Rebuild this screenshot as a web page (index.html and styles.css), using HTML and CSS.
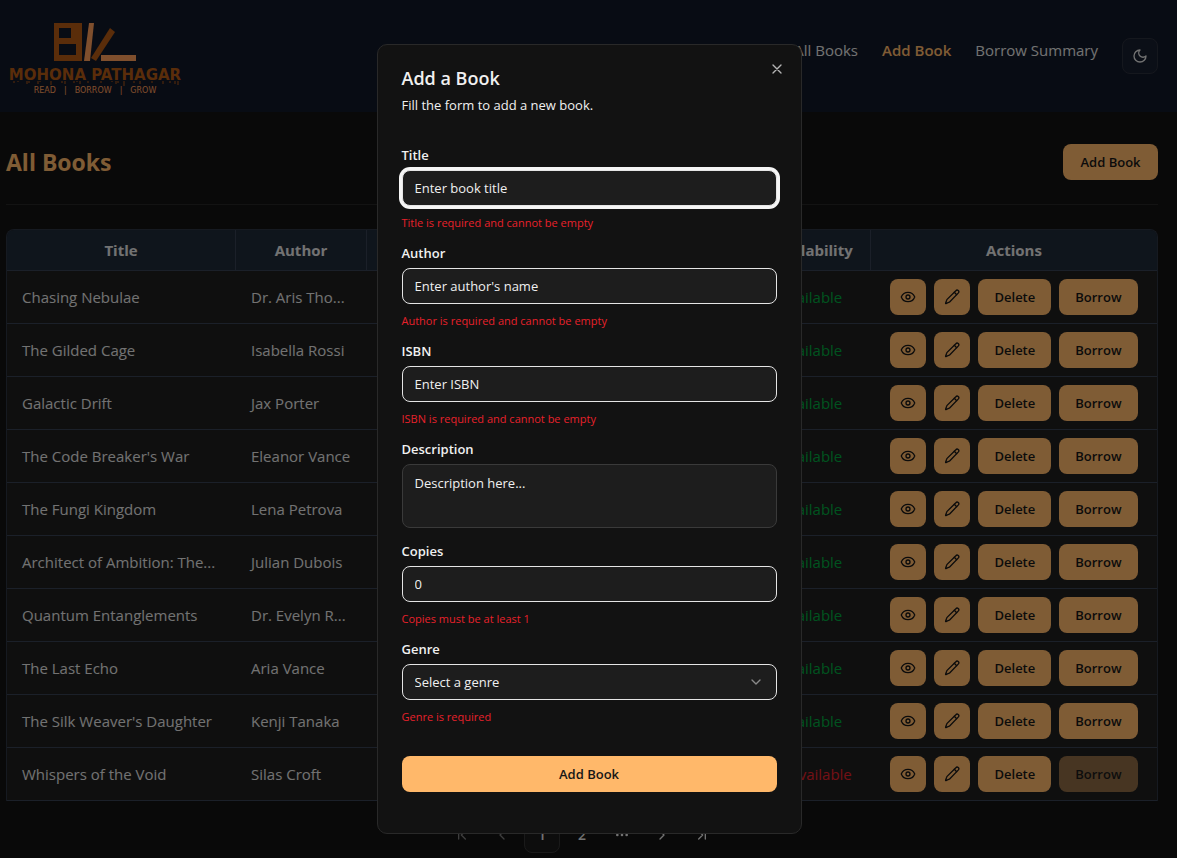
FILE: index.html
```html
<!DOCTYPE html>
<html lang="en">
<head>
<meta charset="utf-8">
<meta name="viewport" content="width=device-width, initial-scale=1">
<title>Mohona Pathagar</title>
<link rel="stylesheet" href="styles.css">
</head>
<body>
<svg class="sprite" aria-hidden="true">
  <symbol id="eye" viewBox="0 0 24 24"><path d="M2.062 12.348a1 1 0 0 1 0-.696 10.75 10.75 0 0 1 19.876 0 1 1 0 0 1 0 .696 10.75 10.75 0 0 1-19.876 0"/><circle cx="12" cy="12" r="3"/></symbol>
  <symbol id="pencil" viewBox="0 0 24 24"><path d="M21.600 5.800a2.400 2.400 0 0 0-3.800-3.200L5 15.200a5 5 0 0 0-1.200 2L2.400 21.300a.4.4 0 0 0 .5.500l4-1.600a5 5 0 0 0 1.900-1.200z"/><path d="m15.500 5 3.500 3.500"/></symbol>
</svg>

<header class="site-header">
  <a class="logo" href="#">
    <svg class="logo-mark" viewBox="0 0 84 40" aria-hidden="true">
      <path class="brand-dark" fill-rule="evenodd" d="M1 1h28v38H1zM6 6v10h12V6zM6 22v11h17V22z"/>
      <path class="brand-light" d="M36 1h5l-4 38h-6z"/>
      <path class="brand-dark" d="M57 6l5 4-19 29-5-3z"/>
      <path class="brand-light" d="M48 33h35v6H48z"/>
    </svg>
    <span class="logo-name">MOHONA PATHAGAR</span>
    <svg class="drips" viewBox="0 0 170 6" aria-hidden="true"><path d="M4 0v2M8 0v1M17 0v3M19 0v2M28 0v3M30 0v1M41 0v4M52 0v2M55 0v3M64 0v2M67 0v1M70 0v3M78 0v2M91 0v2M102 0v1M106 0v3M108 0v2M114 0v5M124 0v2M130 0v3M142 0v2M153 0v3M160 0v2M165 0v3M168 0v4"/></svg>
    <span class="tagline"><span>READ</span><span>|</span><span>BORROW</span><span>|</span><span>GROW</span></span>
  </a>
  <nav class="nav">
    <div class="links">
      <a href="#">All Books</a>
      <a class="current" href="#">Add Book</a>
      <a href="#">Borrow Summary</a>
    </div>
    <button class="theme" aria-label="Toggle theme"><svg class="icon" viewBox="0 0 24 24"><path d="M12 3a6 6 0 0 0 9 9 9 9 0 1 1-9-9Z"/></svg></button>
  </nav>
</header>

<main class="page">
  <div class="page-head">
    <h1>All Books</h1>
    <button class="btn wide">Add Book</button>
  </div>
  <table class="books">
    <colgroup><col class="c-title"><col class="c-author"><col class="c-genre"><col class="c-isbn"><col class="c-copies"><col class="c-avail"><col class="c-actions"></colgroup>
    <thead>
      <tr><th>Title</th><th>Author</th><th>Genre</th><th>ISBN</th><th>Copies</th><th>Availability</th><th>Actions</th></tr>
    </thead>
    <tbody>
      <tr><td>Chasing Nebulae</td><td>Dr. Aris Tho...</td><td></td><td></td><td></td><td class="yes">Available</td><td><div class="actions"><button class="btn square" aria-label="View"><svg class="icon"><use href="#eye"/></svg></button><button class="btn square" aria-label="Edit"><svg class="icon"><use href="#pencil"/></svg></button><button class="btn">Delete</button><button class="btn">Borrow</button></div></td></tr>
      <tr><td>The Gilded Cage</td><td>Isabella Rossi</td><td></td><td></td><td></td><td class="yes">Available</td><td><div class="actions"><button class="btn square" aria-label="View"><svg class="icon"><use href="#eye"/></svg></button><button class="btn square" aria-label="Edit"><svg class="icon"><use href="#pencil"/></svg></button><button class="btn">Delete</button><button class="btn">Borrow</button></div></td></tr>
      <tr><td>Galactic Drift</td><td>Jax Porter</td><td></td><td></td><td></td><td class="yes">Available</td><td><div class="actions"><button class="btn square" aria-label="View"><svg class="icon"><use href="#eye"/></svg></button><button class="btn square" aria-label="Edit"><svg class="icon"><use href="#pencil"/></svg></button><button class="btn">Delete</button><button class="btn">Borrow</button></div></td></tr>
      <tr><td>The Code Breaker's War</td><td>Eleanor Vance</td><td></td><td></td><td></td><td class="yes">Available</td><td><div class="actions"><button class="btn square" aria-label="View"><svg class="icon"><use href="#eye"/></svg></button><button class="btn square" aria-label="Edit"><svg class="icon"><use href="#pencil"/></svg></button><button class="btn">Delete</button><button class="btn">Borrow</button></div></td></tr>
      <tr><td>The Fungi Kingdom</td><td>Lena Petrova</td><td></td><td></td><td></td><td class="yes">Available</td><td><div class="actions"><button class="btn square" aria-label="View"><svg class="icon"><use href="#eye"/></svg></button><button class="btn square" aria-label="Edit"><svg class="icon"><use href="#pencil"/></svg></button><button class="btn">Delete</button><button class="btn">Borrow</button></div></td></tr>
      <tr><td>Architect of Ambition: The...</td><td>Julian Dubois</td><td></td><td></td><td></td><td class="yes">Available</td><td><div class="actions"><button class="btn square" aria-label="View"><svg class="icon"><use href="#eye"/></svg></button><button class="btn square" aria-label="Edit"><svg class="icon"><use href="#pencil"/></svg></button><button class="btn">Delete</button><button class="btn">Borrow</button></div></td></tr>
      <tr><td>Quantum Entanglements</td><td>Dr. Evelyn R...</td><td></td><td></td><td></td><td class="yes">Available</td><td><div class="actions"><button class="btn square" aria-label="View"><svg class="icon"><use href="#eye"/></svg></button><button class="btn square" aria-label="Edit"><svg class="icon"><use href="#pencil"/></svg></button><button class="btn">Delete</button><button class="btn">Borrow</button></div></td></tr>
      <tr><td>The Last Echo</td><td>Aria Vance</td><td></td><td></td><td></td><td class="yes">Available</td><td><div class="actions"><button class="btn square" aria-label="View"><svg class="icon"><use href="#eye"/></svg></button><button class="btn square" aria-label="Edit"><svg class="icon"><use href="#pencil"/></svg></button><button class="btn">Delete</button><button class="btn">Borrow</button></div></td></tr>
      <tr><td>The Silk Weaver's Daughter</td><td>Kenji Tanaka</td><td></td><td></td><td></td><td class="yes">Available</td><td><div class="actions"><button class="btn square" aria-label="View"><svg class="icon"><use href="#eye"/></svg></button><button class="btn square" aria-label="Edit"><svg class="icon"><use href="#pencil"/></svg></button><button class="btn">Delete</button><button class="btn">Borrow</button></div></td></tr>
      <tr><td>Whispers of the Void</td><td>Silas Croft</td><td></td><td></td><td></td><td class="no">Unavailable</td><td><div class="actions"><button class="btn square" aria-label="View"><svg class="icon"><use href="#eye"/></svg></button><button class="btn square" aria-label="Edit"><svg class="icon"><use href="#pencil"/></svg></button><button class="btn">Delete</button><button class="btn" disabled>Borrow</button></div></td></tr>
    </tbody>
  </table>
  <nav class="pager" aria-label="Pagination">
    <button disabled aria-label="First page"><svg class="icon" viewBox="0 0 24 24"><path d="m17 18-6-6 6-6M7 6v12"/></svg></button>
    <button disabled aria-label="Previous page"><svg class="icon" viewBox="0 0 24 24"><path d="m15 18-6-6 6-6"/></svg></button>
    <button class="active">1</button>
    <button>2</button>
    <button aria-label="More pages"><svg class="icon" viewBox="0 0 24 24"><circle cx="12" cy="12" r="1"/><circle cx="19" cy="12" r="1"/><circle cx="5" cy="12" r="1"/></svg></button>
    <button aria-label="Next page"><svg class="icon" viewBox="0 0 24 24"><path d="m9 18 6-6-6-6"/></svg></button>
    <button aria-label="Last page"><svg class="icon" viewBox="0 0 24 24"><path d="m7 18 6-6-6-6M17 6v12"/></svg></button>
  </nav>
</main>

<div class="overlay">
  <section class="dialog" role="dialog" aria-modal="true" aria-labelledby="dlg-title">
    <button class="close" aria-label="Close"><svg class="icon" viewBox="0 0 24 24"><path d="M18 6 6 18M6 6l12 12"/></svg></button>
    <h2 id="dlg-title">Add a Book</h2>
    <p class="lead">Fill the form to add a new book.</p>
    <form class="form">
      <div class="field"><label for="title">Title</label><input class="control focused" id="title" type="text" placeholder="Enter book title"><p class="error">Title is required and cannot be empty</p></div>
      <div class="field"><label for="author">Author</label><input class="control" id="author" type="text" placeholder="Enter author's name"><p class="error">Author is required and cannot be empty</p></div>
      <div class="field"><label for="isbn">ISBN</label><input class="control" id="isbn" type="text" placeholder="Enter ISBN"><p class="error">ISBN is required and cannot be empty</p></div>
      <div class="field"><label for="desc">Description</label><textarea class="control area" id="desc" placeholder="Description here..."></textarea></div>
      <div class="field"><label for="copies">Copies</label><input class="control" id="copies" type="number" value="0"><p class="error">Copies must be at least 1</p></div>
      <div class="field"><label for="genre">Genre</label>
        <div class="select"><select class="control" id="genre"><option>Select a genre</option></select><svg class="icon" viewBox="0 0 24 24" aria-hidden="true"><path d="m6 9 6 6 6-6"/></svg></div>
        <p class="error">Genre is required</p></div>
      <button class="btn submit" type="button">Add Book</button>
    </form>
  </section>
</div>
</body>
</html>
```
FILE: styles.css
```css
* { box-sizing: border-box; }
body, h1, h2, p { margin: 0; }
body {
  min-height: 100vh;
  overflow: hidden;
  background: #121212;
  color: #e5e5e5;
  font: 15px/24px "Open Sans", "Noto Sans", sans-serif;
}
button, input, textarea, select { font: inherit; color: inherit; }
a { color: inherit; text-decoration: none; }
.sprite { display: none; }
.icon {
  width: 16px;
  height: 16px;
  flex: none;
  fill: none;
  stroke: currentColor;
  stroke-width: 2;
  stroke-linecap: round;
  stroke-linejoin: round;
}

.site-header {
  display: flex;
  justify-content: space-between;
  align-items: center;
  height: 112px;
  padding: 0 19px 0 10px;
  background: #101828;
}
.logo { display: flex; flex-direction: column; align-items: center; width: 170px; padding-top: 4px; }
.logo-mark { width: 84px; height: 40px; }
.brand-dark { fill: #b45a14; }
.brand-light { fill: #ff9e5a; }
.logo-name {
  margin-top: 5px;
  color: #b45a14;
  font: bold 15px/16px "DejaVu Sans", sans-serif;
  white-space: nowrap;
}
.drips { width: 170px; height: 6px; margin-top: -2px; stroke: #b45a14; stroke-width: 1; }
.tagline {
  display: flex;
  gap: 8px;
  color: #ff9e5a;
  font: 8px/8px "DejaVu Sans", sans-serif;
}
.nav { display: flex; align-items: center; gap: 24px; }
.links { display: flex; gap: 24px; padding-bottom: 12px; }
.current { color: #ffb86a; font-weight: 600; }
.theme {
  display: grid;
  place-items: center;
  width: 36px;
  height: 36px;
  padding: 0;
  border: 1px solid #2b303c;
  border-radius: 8px;
  background: #171f2e;
}

.page { padding: 32px 19px 0 6px; }
.page-head {
  display: flex;
  justify-content: space-between;
  align-items: center;
  padding-bottom: 24px;
  border-bottom: 1px solid #262626;
}
h1 { color: #ffb86a; font-size: 23px; line-height: 36px; font-weight: 700; }
.btn {
  height: 36px;
  padding: 0 16px;
  border: 0;
  border-radius: 8px;
  background: #ffb86a;
  color: #171717;
  font-size: 13px;
  line-height: 20px;
  font-weight: 600;
  white-space: nowrap;
}
.btn:disabled { opacity: 0.5; }
.btn.wide { min-width: 95px; }
.square { display: grid; place-items: center; width: 36px; padding: 0; }

.books {
  width: 100%;
  margin-top: 24px;
  table-layout: fixed;
  border: 1px solid #2c3442;
  border-bottom: 0;
  border-radius: 8px 8px 0 0;
  border-spacing: 0;
  overflow: hidden;
  background: #1e1e1e;
}
.c-title { width: 229px; }
.c-author { width: 131px; }
.c-genre { width: 12%; }
.c-isbn { width: 12%; }
.c-copies { width: auto; }
.c-avail { width: 120px; }
.c-actions { width: 286px; }
.books th {
  height: 41px;
  padding: 0;
  background: #1e2a39;
  border-right: 1px solid #364153;
  border-bottom: 1px solid #364153;
  font-weight: 700;
}
.books th:last-child { border-right: 0; }
.books td {
  height: 53px;
  padding: 0 0 0 15px;
  border-bottom: 1px solid #364153;
  white-space: nowrap;
}
.books td.yes, .books td.no { padding: 0; text-align: center; }
.books td:last-child { padding: 0; }
.books .yes { color: #00a63e; }
.books .no { color: #e7212b; }
.actions { display: flex; justify-content: center; gap: 8px; }

.pager { display: flex; justify-content: center; gap: 4px; padding-top: 16px; }
.pager button {
  display: grid;
  place-items: center;
  width: 36px;
  height: 36px;
  padding: 0;
  border: 1px solid transparent;
  border-radius: 8px;
  background: none;
  font-size: 14px;
  font-weight: 600;
}
.pager button:disabled { opacity: 0.5; }
.pager .active { background: #1b1b1b; border-color: #353535; }

.overlay {
  position: fixed;
  inset: 0;
  display: flex;
  justify-content: center;
  align-items: flex-start;
  padding: 44px 0 0 1px;
  background: rgba(0, 0, 0, 0.5);
}
.dialog {
  position: relative;
  width: 100%;
  max-width: 425px;
  padding: 24px 24px 41px;
  border: 1px solid #292929;
  border-radius: 10px;
  background: #121212;
  color: #f0f0f0;
  font-size: 13px;
  line-height: 20px;
}
.close {
  position: absolute;
  top: 16px;
  right: 16px;
  display: grid;
  padding: 0;
  border: 0;
  background: none;
  color: #b5b5b5;
}
.dialog h2 { font-size: 18px; line-height: 18px; font-weight: 600; }
.lead { margin-top: 8px; font-weight: 500; }
.form { display: grid; gap: 16px; margin-top: 33px; }
.field { display: grid; gap: 8px; }
.field label { line-height: 14px; font-weight: 600; }
.control {
  display: block;
  width: 100%;
  height: 36px;
  margin: 0;
  padding: 0 12px;
  border: 1px solid #e5e5e5;
  border-radius: 8px;
  background: #1d1d1d;
  font-weight: 500;
  outline: 0;
  appearance: none;
}
.control::placeholder { color: inherit; opacity: 1; }
.control::-webkit-inner-spin-button { appearance: none; }
.focused { box-shadow: 0 0 0 3px #f5f5f5; }
.area { height: 64px; padding: 8px 12px; border-color: #3a3a3a; resize: none; }
.select { display: grid; align-items: center; }
.select > * { grid-area: 1 / 1; }
.select .icon { justify-self: end; margin-right: 13px; color: #8a8a8a; pointer-events: none; }
.error { color: #e7212b; font-size: 11px; line-height: 18px; margin-bottom: -2px; }
.submit { margin-top: 16px; }
```
